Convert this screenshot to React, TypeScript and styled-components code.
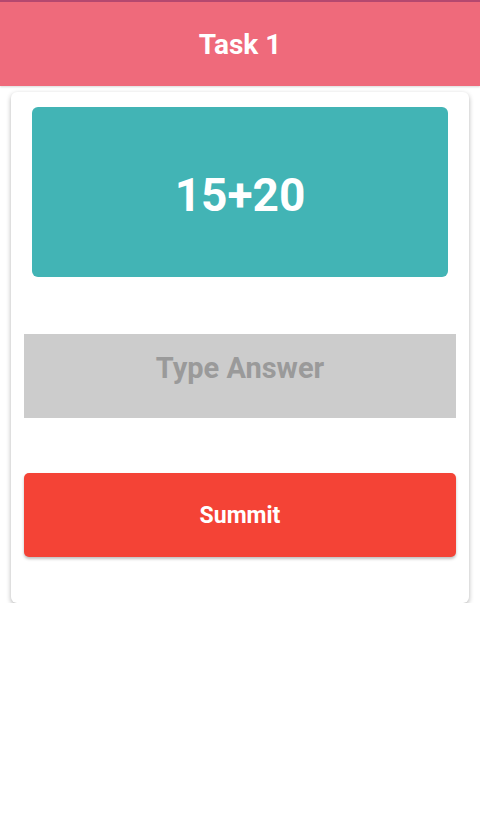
import React from 'react'
import styled, { createGlobalStyle } from 'styled-components'

const Global = createGlobalStyle`
  body {
    margin: 0;
    background: #ffffff;
    font-family: Roboto, "Liberation Sans", sans-serif;
  }
`

const Header = styled.header`
  height: 84px;
  background: #ef6a7b;
  border-top: 2px solid #b5486f;
  display: flex;
  align-items: center;
  justify-content: center;
  color: #ffffff;
  font-size: 28px;
  font-weight: 700;
  box-shadow: 0 1px 2px rgba(0, 0, 0, 0.15);
`

const Card = styled.div`
  margin: 6px 11px 0;
  padding: 15px 13px 46px;
  background: #ffffff;
  border-radius: 6px;
  box-shadow: 0 2px 5px rgba(0, 0, 0, 0.3);
  display: flex;
  flex-direction: column;
`

const Question = styled.div`
  margin: 0 8px;
  height: 170px;
  padding-top: 6px;
  box-sizing: border-box;
  background: #42b4b5;
  border-radius: 6px;
  display: flex;
  align-items: center;
  justify-content: center;
  color: #ffffff;
  font-size: 46px;
  font-weight: 700;
`

const Answer = styled.input`
  margin-top: 57px;
  height: 84px;
  box-sizing: border-box;
  border: none;
  outline: none;
  background: #cccccc;
  text-align: center;
  font-family: Roboto, "Liberation Sans", sans-serif;
  font-size: 29px;
  font-weight: 700;
  color: #555;
  padding: 0 0 16px;
  &::placeholder {
    color: #9a9a9a;
  }
`

const SubmitButton = styled.button`
  margin-top: 55px;
  height: 84px;
  border: none;
  border-radius: 5px;
  background: #f44336;
  color: #ffffff;
  font-family: Roboto, "Liberation Sans", sans-serif;
  font-size: 23px;
  font-weight: 700;
  box-shadow: 0 2px 3px rgba(0, 0, 0, 0.25);
`

export default function App() {
  return (
    <>
      <Global />
      <Header>Task 1</Header>
      <Card>
        <Question>15+20</Question>
        <Answer placeholder="Type Answer" />
        <SubmitButton>Summit</SubmitButton>
      </Card>
    </>
  )
}
